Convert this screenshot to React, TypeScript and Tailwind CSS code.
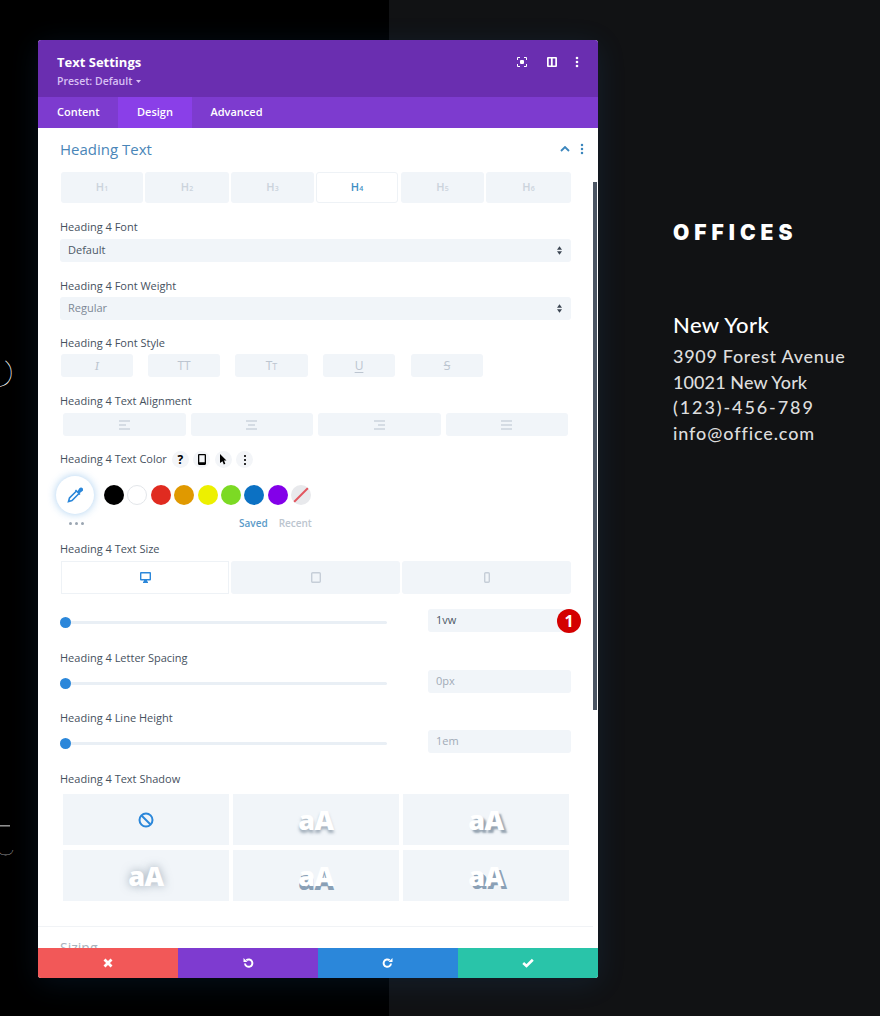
import React from "react";

const sans = "font-['Open_Sans',sans-serif]";

function Label({ children, className = "" }: { children: React.ReactNode; className?: string }) {
  return <div className={`h-4 ml-[22px] text-[11px] leading-4 font-medium text-[#46515e] ${className}`}>{children}</div>;
}

function Muted({ children }: { children: React.ReactNode }) {
  return <div className="flex items-center justify-center rounded-[3px] bg-[#f1f5f9] text-[#bcc5d0]">{children}</div>;
}

function HBtn({ n, w, active }: { n: number; w: string; active?: boolean }) {
  return (
    <div className={`${w} h-[31px] flex items-center justify-center rounded-[3px] font-semibold text-[11px] ${active ? "bg-white border border-[#eef2f6] text-[#3f8fc4]" : "bg-[#f1f5f9] text-[#cbd3dc]"}`}>
      H<span className="text-[7px] mt-[3px]">{n}</span>
    </div>
  );
}

function Select({ text, dark }: { text: string; dark?: boolean }) {
  return (
    <div className={`ml-[22px] w-[511px] h-[23px] flex items-center justify-between pl-2 pr-[9px] rounded-[3px] bg-[#f1f5f9] text-[11px] ${dark ? "text-[#4c5866]" : "text-[#7d8896]"}`}>
      {text}
      <svg width="5" height="9" viewBox="0 0 6 10" fill="#3c4653"><path d="M3 0 6 4H0zM3 10 0 6h6z" /></svg>
    </div>
  );
}

function Lines({ kind }: { kind: "l" | "c" | "r" | "j" }) {
  const rows: Record<string, [number, number][]> = {
    l: [[0, 11], [0, 7], [0, 11]],
    c: [[0, 11], [2, 7], [0, 11]],
    r: [[0, 11], [4, 7], [0, 11]],
    j: [[0, 11], [0, 11], [0, 11]],
  };
  return (
    <svg width="11" height="10" viewBox="0 0 11 10" stroke="#c6ced8" strokeWidth="1.3">
      {rows[kind].map(([x, w], i) => <line key={i} x1={x} x2={x + w} y1={1 + i * 4} y2={1 + i * 4} />)}
    </svg>
  );
}

function Circle({ children }: { children: React.ReactNode }) {
  return <div className="w-[17px] h-[17px] rounded-full bg-[#f3f5f8] flex items-center justify-center text-[12px] font-bold text-black">{children}</div>;
}

function Kebab({ fill, size = 2 }: { fill: string; size?: number }) {
  return (
    <svg width="4" height="12" viewBox="0 0 4 12" fill={fill}>
      <circle cx="2" cy="2" r={size / 1.3} /><circle cx="2" cy="6" r={size / 1.3} /><circle cx="2" cy="10" r={size / 1.3} />
    </svg>
  );
}

function Slider({ value, active, badge }: { value: string; active?: boolean; badge?: boolean }) {
  return (
    <div className="ml-[22px] w-[511px] h-[23px] flex items-center relative">
      <div className="relative mt-[3px] w-[327px] h-[3px] bg-[#e9eff5] rounded-full">
        <div className="absolute left-0 top-[-4px] w-[11px] h-[11px] rounded-full bg-[#2b87da]" />
      </div>
      <div className={`ml-[41px] w-[143px] h-[23px] flex items-center pl-2 rounded-[3px] bg-[#f1f5f9] text-[11px] ${active ? "text-[#4c5866]" : "text-[#a1abb7]"}`}>{value}</div>
      {badge && (
        <div className="absolute left-[497px] top-0 w-6 h-6 rounded-full bg-[#d40000] text-white text-[16px] font-bold flex items-center justify-center">1</div>
      )}
    </div>
  );
}

function Shadow({ s }: { s: string }) {
  return (
    <div className="h-[51px] bg-[#f1f5f9] flex items-center justify-center">
      <span className={`text-[27px] font-extrabold text-white tracking-[-0.5px] leading-none ${s}`}>aA</span>
    </div>
  );
}

const swatches = ["bg-black", "bg-white border border-[#e3e6ea]", "bg-[#e02b20]", "bg-[#e09900]", "bg-[#edf000]", "bg-[#7cda24]", "bg-[#0c71c3]", "bg-[#8300e9]"];

export default function App() {
  return (
    <div className={`relative w-[880px] h-[1016px] overflow-hidden flex bg-black ${sans}`}>
      <div className="w-[389px] h-full bg-black relative overflow-hidden text-white font-thin font-['Lato',sans-serif]">
        <span className="absolute left-[-30px] top-[342px] text-[64px] leading-none [transform:rotate(-90deg)_scaleX(-1)]">S</span>
        <span className="absolute left-[-30px] top-[796px] text-[60px] leading-none -rotate-90">T</span>
        <div className="absolute left-0 top-[850px] w-[14px] h-[10px] overflow-hidden">
          <span className="absolute left-[-6px] top-[-15px] text-[30px] leading-none -rotate-90">c</span>
        </div>
      </div>
      <div className="flex-1 bg-[#111214] pl-[284px] pt-[218px]">
        <div className="text-[21px] leading-[30px] font-black tracking-[5px] text-white font-['Inter',sans-serif]">OFFICES</div>
        <div className="font-['Lato',sans-serif]">
          <div className="mt-[62px] text-[22px] leading-[30px] font-medium text-white tracking-[0.4px]">New York</div>
          <div className="mt-1 text-[18px] leading-[25.6px] font-medium text-[#dddddd] whitespace-nowrap">
            <div className="tracking-[0.7px]">3909 Forest Avenue</div>
            <div className="tracking-[0.1px]">10021 New York</div>
            <div className="tracking-[1.9px]">(123)-456-789</div>
            <div className="tracking-[0.9px]">info@office.com</div>
          </div>
        </div>
      </div>

      <div className="absolute left-[38px] top-[40px] w-[560px] h-[938px] flex flex-col overflow-hidden rounded-[3px] bg-white shadow-[0_5px_30px_rgba(43,135,218,0.12)]">
        <div className="h-[57px] shrink-0 bg-[#6a2eb0] flex items-start justify-between pl-[19px] pr-[19px]">
          <div>
            <div className="mt-[13px] text-[13px] leading-[18px] font-bold text-white">Text Settings</div>
            <div className="mt-[3px] text-[10.5px] leading-[14px] font-semibold text-[#d8c0f4] flex items-center gap-1">
              Preset: Default
              <svg width="5" height="3" viewBox="0 0 5 3" fill="#d8c0f4"><path d="M0 0h5L2.5 3z" /></svg>
            </div>
          </div>
          <div className="flex items-center mt-[16px] h-3">
            <svg width="10" height="10" viewBox="0 0 10 10" fill="none" stroke="white" strokeWidth="1">
              <path d="M.5 3V.5H3M7 .5h2.5V3M9.500 7v2.500H7M3 9.500H.5V7" />
              <rect x="3" y="3" width="4" height="4" fill="white" stroke="none" rx="1" />
            </svg>
            <svg className="ml-5" width="10" height="10" viewBox="0 0 10 10" fill="white">
              <path d="M1 0h8a1 1 0 0 1 1 1v8a1 1 0 0 1-1 1H1a1 1 0 0 1-1-1V1a1 1 0 0 1 1-1zm.7 1.600v6.800h2.200V1.600zm4 0v6.800h2.600V1.600z" />
            </svg>
            <div className="ml-[18px]"><Kebab fill="white" size={1.7} /></div>
          </div>
        </div>
        <div className="h-[31px] shrink-0 bg-[#7d3bcf] flex text-[11px] font-semibold text-white">
          <div className="w-20 flex items-center pl-[19px]">Content</div>
          <div className="w-[74px] bg-[#8a3fe8] flex items-center justify-center">Design</div>
          <div className="w-[89px] flex items-center justify-center">Advanced</div>
        </div>

        <div className="flex-1 min-h-0 overflow-hidden relative">
          <div className="absolute right-px top-[54px] w-1 h-[528px] bg-[#4b5563]" />
          <div className="h-[42px] mb-[2px] ml-[22px] pr-[14px] flex items-center justify-between">
            <span className="text-[15px] leading-[20px] mb-px text-[#4a86b8]">Heading Text</span>
            <span className="flex items-center gap-[10px]">
              <svg width="10" height="6" viewBox="0 0 10 6" fill="none" stroke="#3b86bd" strokeWidth="1.8"><path d="M1 5l4-4 4 4" /></svg>
              <Kebab fill="#3b86bd" size={1.6} />
            </span>
          </div>
          <div className="ml-[23px] flex">
            <HBtn n={1} w="w-[82px]" />
            <HBtn n={2} w="w-[84px] ml-[2px]" />
            <HBtn n={3} w="w-[83px] ml-[2px]" />
            <HBtn n={4} w="w-[82px] ml-[2px]" active />
            <HBtn n={5} w="w-[83px] ml-[3px]" />
            <HBtn n={6} w="w-[85px] ml-[2px]" />
          </div>

          <Label className="mt-4">Heading 4 Font</Label>
          <div className="mt-1"><Select text="Default" dark /></div>
          <Label className="mt-4">Heading 4 Font Weight</Label>
          <div className="mt-[3px]"><Select text="Regular" /></div>

          <Label className="mt-[15px]">Heading 4 Font Style</Label>
          <div className="mt-[3px] ml-[23px] flex gap-[15px] h-[23px] text-[12px]">
            <div className="w-[72px] grid"><Muted><span className="italic font-serif text-[13px]">I</span></Muted></div>
            <div className="w-[72px] grid"><Muted>TT</Muted></div>
            <div className="w-[73px] grid"><Muted><span>T<span className="text-[9px]">T</span></span></Muted></div>
            <div className="w-[72px] grid"><Muted><span className="underline underline-offset-2">U</span></Muted></div>
            <div className="w-[72px] ml-px grid"><Muted><span className="line-through">S</span></Muted></div>
          </div>

          <Label className="mt-4">Heading 4 Text Alignment</Label>
          <div className="mt-1 ml-[25px] w-[505px] h-[23px] grid grid-cols-4 gap-[5px]">
            <Muted><Lines kind="l" /></Muted>
            <Muted><Lines kind="c" /></Muted>
            <Muted><Lines kind="r" /></Muted>
            <Muted><Lines kind="j" /></Muted>
          </div>

          <div className="mt-[15px] ml-[22px] h-4 flex items-center text-[11px] font-medium text-[#46515e]">
            <span>Heading 4 Text Color</span>
            <div className="ml-[5px] mt-px flex gap-[4.5px] items-center">
              <Circle>?</Circle>
              <Circle>
                <svg width="8" height="11" viewBox="0 0 8 11"><path fillRule="evenodd" d="M1.2 0h5.6C7.5 0 8 .5 8 1.2v8.6c0 .7-.5 1.2-1.2 1.2H1.2C.5 11 0 10.500 0 9.800V1.200C0 .5.500 0 1.200 0zM1.300 1.300v6.900h5.400V1.300z" /></svg>
              </Circle>
              <Circle>
                <svg width="8" height="11" viewBox="0 0 8 11"><path d="M1 0l6.500 6.500H5l1.300 3.300-1.500.7L3.500 7.200 1 9z" /></svg>
              </Circle>
              <Circle><Kebab fill="black" size={1.4} /></Circle>
            </div>
          </div>

          <div className="mt-[8.5px] ml-[18px] h-[38px] flex items-center">
            <div className="w-[38px] h-[38px] rounded-full bg-white shadow-[0_0_8px_rgba(43,135,218,0.4)] flex items-center justify-center">
              <svg width="16" height="16" viewBox="0 0 16 16" fill="none" stroke="#2b87da" strokeWidth="1.6">
                <path d="M9.500 4 2.500 11 1.500 14.500 5 13.500 12 6.500" />
                <path d="M8.500 3l4.500 4.500M11 5 13 1.800c.6-.6 1.600-.5 2 0 .4.500.4 1.300 0 1.700L11.500 6" fill="#2b87da" />
              </svg>
            </div>
            <div className="ml-[10px] flex gap-[3.400px]">
              {swatches.map((c) => <div key={c} className={`w-5 h-5 rounded-full ${c}`} />)}
              <div className="w-5 h-5 rounded-full bg-[#e8e9ec] flex items-center justify-center overflow-hidden">
                <svg width="20" height="20" viewBox="0 0 20 20" stroke="#e2555f" strokeWidth="2"><line x1="3" y1="17" x2="17" y2="3" /></svg>
              </div>
            </div>
          </div>

          <div className="mt-[2.5px] h-[15px] flex items-center relative text-[10px] font-semibold">
            <div className="ml-[31px] flex gap-[3px]">
              <span className="w-[3px] h-[3px] rounded-full bg-[#9aa5b1]" />
              <span className="w-[3px] h-[3px] rounded-full bg-[#9aa5b1]" />
              <span className="w-[3px] h-[3px] rounded-full bg-[#9aa5b1]" />
            </div>
            <span className="ml-[155px] text-[#5a9ac8]">Saved</span>
            <span className="ml-[11px] text-[#bcc5cf]">Recent</span>
          </div>

          <Label className="mt-[10px]">Heading 4 Text Size</Label>
          <div className="mt-1 ml-[23px] w-[510px] h-[33px] flex gap-[2px]">
            <div className="w-[168px] bg-white border border-[#eef2f6] flex items-center justify-center">
              <svg width="11" height="11" viewBox="0 0 11 11" fill="#2b87da"><path fillRule="evenodd" d="M1 0h9a1 1 0 0 1 1 1v6.500a1 1 0 0 1-1 1H7v1h1V11H3V9.500h1v-1H1a1 1 0 0 1-1-1V1a1 1 0 0 1 1-1zm.4 1.400v5.700h8.200V1.400z" /></svg>
            </div>
            <div className="w-[169px] grid">
              <Muted><svg width="10" height="11" viewBox="0 0 10 11" fill="none" stroke="#c6ced8" strokeWidth="1.400"><rect x=".7" y=".7" width="8.600" height="9.600" rx="1" /></svg></Muted>
            </div>
            <div className="w-[169px] grid">
              <Muted><svg width="6" height="11" viewBox="0 0 6 11" fill="none" stroke="#c6ced8" strokeWidth="1.400"><rect x=".7" y=".7" width="4.600" height="9.600" rx="1" /></svg></Muted>
            </div>
          </div>

          <div className="mt-[15px]"><Slider value="1vw" active badge /></div>
          <Label className="mt-[18px]">Heading 4 Letter Spacing</Label>
          <div className="mt-1"><Slider value="0px" /></div>
          <Label className="mt-[17px]">Heading 4 Line Height</Label>
          <div className="mt-1"><Slider value="1em" /></div>

          <Label className="mt-[18px]">Heading 4 Text Shadow</Label>
          <div className="mt-[7px] ml-[25px] w-[506px] grid grid-cols-3 gap-x-1 gap-y-[5px]">
            <div className="h-[51px] bg-[#f1f5f9] flex items-center justify-center">
              <svg width="16" height="16" viewBox="0 0 16 16" fill="none" stroke="#2b87da" strokeWidth="2"><circle cx="8" cy="8" r="6.500" /><line x1="3.500" y1="3.500" x2="12.500" y2="12.500" /></svg>
            </div>
            <Shadow s="[text-shadow:0_3px_3px_rgba(90,110,130,0.5)]" />
            <Shadow s="[text-shadow:3px_3px_2px_rgba(90,110,130,0.6)]" />
            <Shadow s="[text-shadow:0_0_10px_rgba(90,110,130,0.55)]" />
            <Shadow s="[text-shadow:0_4px_0_rgba(120,145,170,0.85)]" />
            <Shadow s="[text-shadow:3px_3px_0_rgba(120,145,170,0.85)]" />
          </div>

          <div className="mt-[25px] h-px bg-[#f1f3f6] mr-[5px]" />
          <div className="mt-[13px] ml-[22px] text-[14px] leading-4 font-medium text-[#aab2bc]">Sizing</div>
        </div>

        <div className="h-[30px] shrink-0 grid grid-cols-4 text-white">
          <div className="bg-[#f25858] flex items-center justify-center">
            <svg width="10" height="10" viewBox="0 0 10 10" stroke="white" strokeWidth="2.800"><path d="M1.500 1.500l7 7M8.500 1.500l-7 7" /></svg>
          </div>
          <div className="bg-[#7e3bd0] flex items-center justify-center">
            <svg width="12" height="12" viewBox="0 0 12 12" fill="none" stroke="white" strokeWidth="2"><path d="M3 6.500a3.700 3.700 0 1 0 1.300-3.200" /><path d="M1.500 1v4h4z" fill="white" stroke="none" /></svg>
          </div>
          <div className="bg-[#2b87da] flex items-center justify-center">
            <svg width="12" height="12" viewBox="0 0 12 12" fill="none" stroke="white" strokeWidth="2"><path d="M9 6.500a3.700 3.700 0 1 1-1.300-3.200" /><path d="M10.500 1v4h-4z" fill="white" stroke="none" /></svg>
          </div>
          <div className="bg-[#29c4a9] flex items-center justify-center">
            <svg width="12" height="10" viewBox="0 0 12 10" fill="none" stroke="white" strokeWidth="2.600"><path d="M1.200 5l3.300 3L10.800 1.800" /></svg>
          </div>
        </div>
      </div>
    </div>
  );
}
